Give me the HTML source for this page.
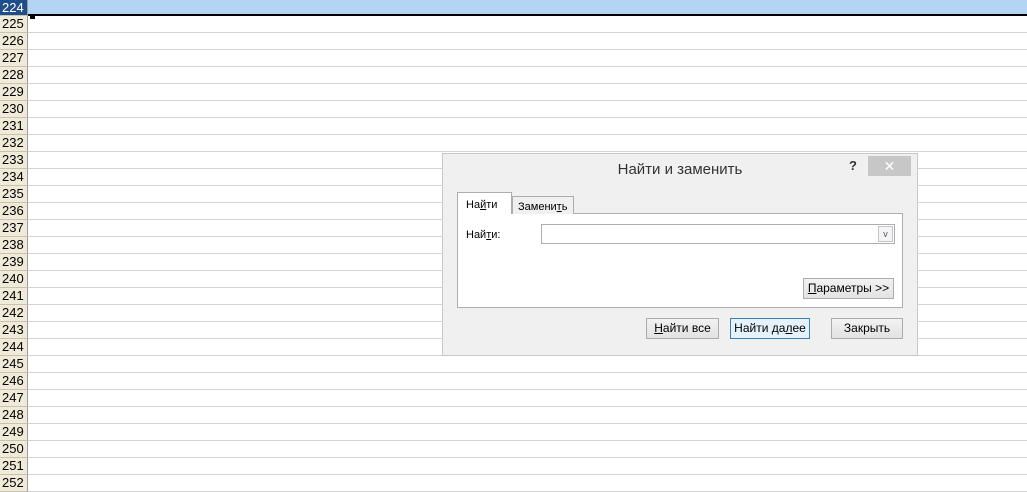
<!DOCTYPE html>
<html><head><meta charset="utf-8"><style>
*{box-sizing:border-box;margin:0;padding:0}
body{width:1027px;height:482px;overflow:hidden;background:#fff;font-family:"Liberation Sans",sans-serif;position:relative}
.r{position:absolute;left:0;width:1027px;height:17px;border-bottom:1px solid #d4d4d4}
.h{position:absolute;left:0;top:0;width:28px;height:17px;background:#f0ebd8;border-right:1px solid #9c9c9c;border-bottom:1px solid #c8c3b0;font-size:13px;line-height:16px;padding-left:2px;color:#000}
.d{position:absolute;left:442px;top:153px;width:476px;height:203px;background:#f0f0f0;border:1px solid #c8c8c8;font-size:12px;color:#000}
.btn{position:absolute;height:21px;background:linear-gradient(#f2f2f2,#e2e2e2);border:1px solid #acacac;text-align:center;line-height:19px;font-size:12px}
u{text-decoration:underline}
</style></head><body>
<div id="rows"></div>
<script>
var s='';for(var i=0;i<29;i++){var t=i*17-1;var sel=i==0;
s+='<div class="r" style="top:'+t+'px;'+(sel?'background:#b4d4f4;top:0;height:16px;border-bottom:2px solid #000':'')+'"><div class="h" style="'+(sel?'background:#1f4e8c;color:#fff;height:16px':'')+'">'+(224+i)+'</div></div>';}
document.getElementById('rows').innerHTML=s;
</script>
<div style="position:absolute;left:30px;top:14px;width:5px;height:5px;background:#000"></div>
<div class="d">
 <div style="position:absolute;left:0;top:0;width:474px;height:32px;text-align:center;font-size:15px;line-height:32px;color:#333">Найти и заменить</div>
 <div style="position:absolute;left:406px;top:4px;font-size:13px;font-weight:bold;color:#333">?</div>
 <div style="position:absolute;left:425px;top:2px;width:43px;height:20px;background:#c7c7c7;color:#fff;text-align:center;line-height:20px;font-size:14px">✕</div>
 <div style="position:absolute;left:14px;top:59px;width:446px;height:95px;background:#fff;border:1px solid #adadad"></div>
 <div style="position:absolute;left:14px;top:38px;width:55px;height:22px;background:#fff;border:1px solid #adadad;border-bottom:none;padding:6px 0 0 8px;font-size:11px">На<u>й</u>ти</div>
 <div style="position:absolute;left:69px;top:42px;width:62px;height:18px;background:#f0f0f0;border:1px solid #adadad;border-bottom:none;padding:4px 0 0 5px;font-size:11px">Замени<u>т</u>ь</div>
 <div style="position:absolute;left:23px;top:75px;font-size:11px">Най<u>т</u>и:</div>
 <div style="position:absolute;left:98px;top:70px;width:354px;height:20px;background:#fff;border:1px solid #abadb3"><div style="position:absolute;right:1px;top:1px;width:15px;height:16px;border:1px solid #c5c5c5;background:#f4f4f4;color:#555;font-size:9px;text-align:center;line-height:15px">v</div></div>
 <div class="btn" style="left:360px;top:124px;width:91px"><u>П</u>араметры &gt;&gt;</div>
 <div class="btn" style="left:203px;top:164px;width:73px"><u>Н</u>айти все</div>
 <div class="btn" style="left:287px;top:164px;width:80px;border-color:#3c7fb1;background:#e5f1fb">Найти да<u>л</u>ее</div>
 <div class="btn" style="left:388px;top:164px;width:72px">Закрыть</div>
</div>
</body></html>
